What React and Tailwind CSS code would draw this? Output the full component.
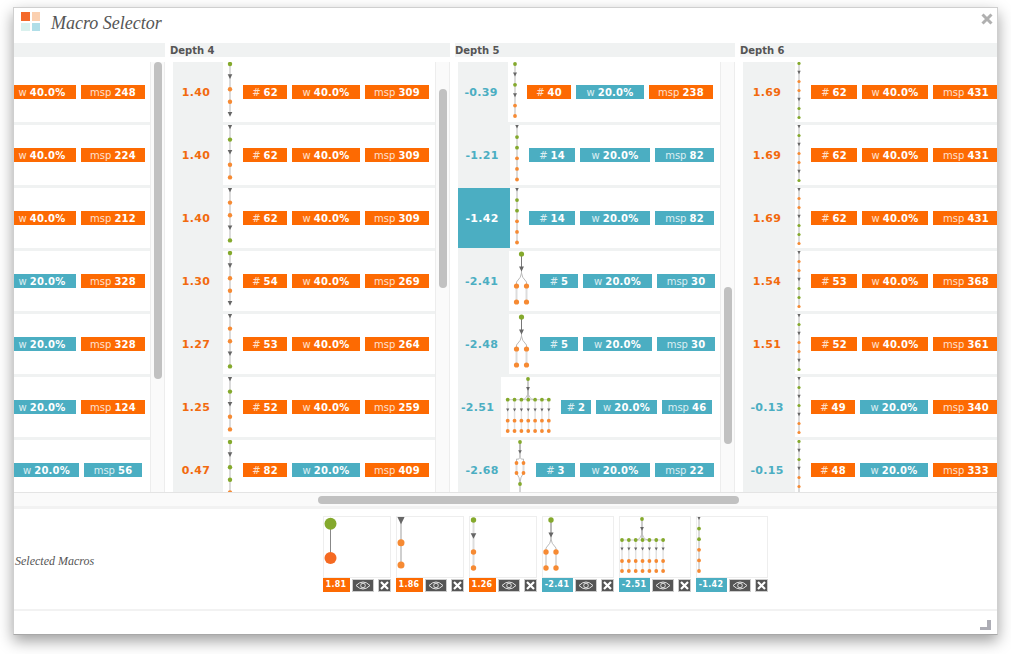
import React from 'react';

const GREEN = '#84a92c';
const ORANGE = '#f68a33';
const DARK = '#666666';

// one tree node: G = green dot, O = orange dot, T = dark triangle
const Node = ({ t, x, y, r, color }) => {
  if (t === 'T') {
    const s = r * 1.05;
    return <polygon points={`${x - s},${y - s} ${x + s},${y - s} ${x},${y + s}`} fill={DARK} />;
  }
  return <circle cx={x} cy={y} r={r} fill={color || (t === 'G' ? GREEN : ORANGE)} />;
};

const Chain = ({ w, h = 60, x, y0, step, r, nodes, line = '#cfcfcf', lineW = 1.5, orange }) => {
  const last = y0 + step * (nodes.length - 1);
  return (
    <svg width={w} height={h} className="shrink-0 block">
      <line x1={x} x2={x} y1={y0} y2={last} stroke={line} strokeWidth={lineW} />
      {nodes.split('').map((t, i) => (
        <Node key={i} t={t} x={x} y={y0 + step * i} r={r} color={t === 'O' ? orange : undefined} />
      ))}
    </svg>
  );
};

const Fork = ({ w, h = 60, x, dx, ys, r, r0, tail }) => {
  const [root, tri, o1, o2] = ys;
  const l = x - dx;
  const rt = x + dx;
  return (
    <svg width={w} height={h} className="shrink-0 block">
      <line x1={x} x2={x} y1={root} y2={tri} stroke="#777" strokeWidth="1" />
      <path d={`M${x} ${tri} L${x} ${tri + 4} Q${x} ${tri + 8} ${l} ${o1 - 4} L${l} ${o1}`} stroke="#bbb" fill="none" />
      <path d={`M${x} ${tri} L${x} ${tri + 4} Q${x} ${tri + 8} ${rt} ${o1 - 4} L${rt} ${o1}`} stroke="#bbb" fill="none" />
      <line x1={l} x2={l} y1={o1} y2={o2} stroke="#dddddd" strokeWidth="2" />
      <line x1={rt} x2={rt} y1={o1} y2={o2} stroke="#dddddd" strokeWidth="2" />
      {tail && (
        <>
          <path d={`M${l} ${o2} Q${x} ${o2 + 4} ${x} ${tail}`} stroke="#bbb" fill="none" />
          <path d={`M${rt} ${o2} Q${x} ${o2 + 4} ${x} ${tail}`} stroke="#bbb" fill="none" />
          <line x1={x} x2={x} y1={tail} y2={h} stroke="#aaa" />
          <Node t="G" x={x} y={tail} r={r} />
        </>
      )}
      <Node t="G" x={x} y={root} r={r0} />
      <Node t="T" x={x} y={tri} r={r * 0.9} />
      {[l, rt].map(px => (
        <g key={px}>
          <Node t="O" x={px} y={o1} r={r} />
          <Node t="O" x={px} y={o2} r={r} />
        </g>
      ))}
    </svg>
  );
};

const Comb = ({ w, h = 60, x, x0, ys }) => {
  const [root, tri, bar, tri2, o1, o2] = ys;
  const xs = [0, 1, 2, 3, 4, 5, 6].map(i => x0 + i * 6.85);
  return (
    <svg width={w} height={h} className="shrink-0 block">
      <line x1={x} x2={x} y1={root} y2={bar} stroke="#999" />
      <line x1={xs[0]} x2={xs[6]} y1={bar} y2={bar} stroke="#cfcfcf" />
      <path d={`M${x - 6} ${bar} Q${x} ${bar - 1} ${x} ${tri + 2} Q${x} ${bar - 1} ${x + 6} ${bar}`} stroke="#bbb" fill="none" />
      <Node t="G" x={x} y={root} r={1.9} />
      <Node t="T" x={x} y={tri} r={1.8} />
      {xs.map(px => (
        <g key={px}>
          <line x1={px} x2={px} y1={bar} y2={o2} stroke="#e2e2e2" strokeWidth="1.5" />
          <Node t="G" x={px} y={bar} r={1.9} />
          <Node t="T" x={px} y={tri2} r={1.5} />
          <Node t="O" x={px} y={o1} r={1.9} />
          <Node t="O" x={px} y={o2} r={1.9} />
        </g>
      ))}
    </svg>
  );
};

const Badge = ({ label, value, tone, width }) => (
  <div
    className={`h-[14px] pt-[1px] shrink-0 flex items-center justify-center gap-[3px] text-[10px] leading-none text-white ${tone === 't' ? 'bg-[#4baec2]' : 'bg-[#fd6a02]'}`}
    style={{ width }}
  >
    <span className="opacity-80">{label}</span>
    <span className="font-bold tracking-[0.2px]">{value}</span>
  </div>
);

const Row = ({ score, tone, selected, tree, badges, pr }) => (
  <div className="h-[60px] shrink-0 bg-white flex items-center overflow-hidden">
    {score ? (
      <div
        className={`flex-1 self-stretch flex items-center justify-center pr-[4px] pt-[2px] text-[11px] font-bold tracking-[0.3px] ${
          selected
            ? 'bg-[#4baec2] text-white'
            : tone === 't'
              ? 'bg-[#f0f2f2] text-[#4baec2]'
              : 'bg-[#f0f2f2] text-[#f26a0e]'
        }`}
      >
        {score}
      </div>
    ) : (
      <div className="flex-1" />
    )}
    {tree}
    <div className="flex gap-[5px]" style={{ paddingRight: pr }}>
      {badges.map(b => (
        <Badge key={b[0]} label={b[0]} value={b[1]} tone={b[2]} width={b[3]} />
      ))}
    </div>
  </div>
);

const Column = ({ title, rows, thumbTop, thumbH }) => (
  <div className="w-[280px] shrink-0 flex flex-col">
    <div className="h-[14px] bg-[#f0f2f2] text-[10px] font-bold leading-[15px] text-[#555]">{title}</div>
    <div className="h-[430px] mt-[5px] flex pl-[3px]">
      <div className="w-[262px] h-full flex flex-col gap-[3px] bg-[#f0f2f2] overflow-hidden">
        {rows.map((r, i) => (
          <Row key={i} {...r} />
        ))}
      </div>
      <div className="w-[15px] h-full bg-[#fafafa] border-x border-[#ededed] flex justify-center">
        {thumbH && <div className="w-[8px] bg-[#c1c1c1] rounded-full" style={{ marginTop: thumbTop, height: thumbH }} />}
      </div>
    </div>
  </div>
);

const d3 = [
  ['40.0%', 'o', '248'],
  ['40.0%', 'o', '224'],
  ['40.0%', 'o', '212'],
  ['20.0%', 't', '328'],
  ['20.0%', 't', '328'],
  ['20.0%', 't', '124'],
].map(([w, t, m]) => ({
  pr: 5,
  badges: [['w', w, t, 68], ['msp', m, 'o', 64]],
}));
d3.push({ pr: 8, badges: [['w', '20.0%', 't', 65], ['msp', '56', 't', 58]] });

const d4Row = (score, nodes, n, w, wt, m, tone = 'o') => ({
  score,
  tone,
  pr: 6,
  tree: <Chain w={20} x={7} y0={2} step={12.6} r={2.2} nodes={nodes} />,
  badges: [['#', n, 'o', 44], ['w', w, wt, 68], ['msp', m, 'o', 64]],
});

const d4 = [
  d4Row('1.40', 'GTOOT', '62', '40.0%', 'o', '309'),
  d4Row('1.40', 'TGTOO', '62', '40.0%', 'o', '309'),
  d4Row('1.40', 'TOOTG', '62', '40.0%', 'o', '309'),
  d4Row('1.30', 'GTOOT', '54', '40.0%', 'o', '269'),
  d4Row('1.27', 'TOOTG', '53', '40.0%', 'o', '264'),
  d4Row('1.25', 'TGTOO', '52', '40.0%', 'o', '259'),
  d4Row('0.47', 'GTGGO', '82', '20.0%', 't', '409'),
];

const tealBadges = (n, m, a, b, c) => [['#', n, 't', a], ['w', '20.0%', 't', b], ['msp', m, 't', c]];
const fork = <Fork w={31} x={12.5} dx={5} ys={[3, 18, 35, 51]} r={2.6} r0={2.6} />;

const d5 = [
  {
    score: '-0.39', tone: 't', pr: 7,
    tree: <Chain w={19} x={7} y0={2} step={10.4} r={1.9} nodes="GTGTOO" />,
    badges: [['#', '40', 'o', 44], ['w', '20.0%', 't', 68], ['msp', '238', 'o', 64]],
  },
  {
    score: '-1.21', tone: 't', pr: 6,
    tree: <Chain w={19} x={7} y0={1.5} step={10.6} r={1.9} nodes="TGGOOO" />,
    badges: tealBadges('14', '82', 46, 70, 59),
  },
  {
    score: '-1.42', tone: 't', selected: true, pr: 6,
    tree: <Chain w={19} x={7} y0={1.5} step={10.6} r={1.9} nodes="TGGOOO" />,
    badges: tealBadges('14', '82', 46, 70, 59),
  },
  { score: '-2.41', tone: 't', pr: 5, tree: fork, badges: tealBadges('5', '30', 38, 69, 58) },
  { score: '-2.48', tone: 't', pr: 5, tree: fork, badges: tealBadges('5', '30', 38, 69, 58) },
  {
    score: '-2.51', tone: 't', pr: 8,
    tree: <Comb w={60} x={27} x0={6.7} ys={[2, 12, 22.7, 33, 43.7, 54]} />,
    badges: tealBadges('2', '46', 30, 61, 50),
  },
  {
    score: '-2.68', tone: 't', pr: 6,
    tree: <Fork w={26} x={10} dx={3.5} ys={[2, 12, 23, 33]} r={1.9} r0={1.9} tail={44} />,
    badges: tealBadges('3', '22', 39, 70, 59),
  },
];

const d6Row = (score, tone, nodes, n, w, wt, m, nw, ww) => ({
  score,
  tone,
  pr: 6,
  tree: <Chain w={16} x={4} y0={1.5} step={9} r={1.6} nodes={nodes} />,
  badges: [['#', n, 'o', nw], ['w', w, wt, ww], ['msp', m, 'o', 66]],
});

const d6 = [
  d6Row('1.69', 'o', 'GTOOTGG', '62', '40.0%', 'o', '431', 46, 66),
  d6Row('1.69', 'o', 'TGTOOTG', '62', '40.0%', 'o', '431', 46, 66),
  d6Row('1.69', 'o', 'TOOTGGO', '62', '40.0%', 'o', '431', 46, 66),
  d6Row('1.54', 'o', 'TOOTGGO', '53', '40.0%', 'o', '368', 46, 66),
  d6Row('1.51', 'o', 'TGTOOTG', '52', '40.0%', 'o', '361', 46, 66),
  d6Row('-0.13', 't', 'TGTGTOO', '49', '20.0%', 't', '340', 44, 68),
  d6Row('-0.15', 't', 'GTGTOOT', '48', '20.0%', 't', '333', 44, 68),
];

const Thumb = ({ tree, score, tone, w, sw }) => (
  <div className="shrink-0" style={{ width: w }}>
    <div className="h-[62px] border border-[#eeeeee] bg-white overflow-hidden">{tree}</div>
    <div className="h-[14px] flex items-end">
      <div
        className={`h-[14px] flex items-center justify-center text-[8px] font-bold tracking-[0.3px] text-white ${tone === 't' ? 'bg-[#4baec2]' : 'bg-[#fd6a02]'}`}
        style={{ width: sw }}
      >
        {score}
      </div>
      <div className="ml-[2px] w-[22px] h-[13px] bg-[#555] border border-[#cccccc] flex items-center justify-center">
        <svg width="16" height="9" viewBox="0 0 16 9" fill="none" stroke="#e4e4e4" strokeWidth="1">
          <path d="M1 4.5Q8 -2.5 15 4.5Q8 11.5 1 4.5Z" />
          <circle cx="8" cy="4.5" r="2.3" />
        </svg>
      </div>
      <div className="ml-auto w-[13px] h-[13px] bg-[#555] border border-[#cccccc] flex items-center justify-center">
        <svg width="9" height="9" viewBox="0 0 9 9" stroke="#ffffff" strokeWidth="2.2">
          <path d="M1 1L8 8M8 1L1 8" />
        </svg>
      </div>
    </div>
  </div>
);

const App = () => (
  <div className="w-[1011px] h-[654px] pt-[7px] pl-[13px] bg-white overflow-hidden [font-family:'DejaVu_Sans',sans-serif]">
    <div className="w-[985px] h-[628px] bg-white border border-[#cfcfcf] border-b-[#a8a8a8] shadow-[0_6px_14px_rgba(0,0,0,0.38)] flex flex-col">
      {/* title bar */}
      <div className="h-[35px] shrink-0 flex items-start pl-[7px] pt-[4px] pr-[4px]">
        <div className="grid grid-cols-[9px_8px] gap-[2px] mt-0">
          <div className="h-[9px] bg-[#f4692a]" />
          <div className="h-[9px] bg-[#fbd0b0]" />
          <div className="h-[8px] bg-[#daf1ee]" />
          <div className="h-[8px] bg-[#b0dee8]" />
        </div>
        <div className="ml-[11px] -mt-[2px] text-[18px] leading-[26px] italic text-[#555] [font-family:'Liberation_Serif',cursive]">Macro Selector</div>
        <svg width="12" height="12" viewBox="0 0 12 12" stroke="#b0b0b0" strokeWidth="3" className="ml-auto mt-[1px]">
          <path d="M1.5 1.5L10.5 10.5M10.5 1.5L1.5 10.5" />
        </svg>
      </div>

      {/* depth columns */}
      <div className="h-[450px] shrink-0 overflow-hidden border-b border-[#e4e4e4]">
        <div className="flex gap-[5px] -ml-[129px]">
          <Column rows={d3} thumbTop={0} thumbH={317} />
          <Column title="Depth 4" rows={d4} thumbTop={27} thumbH={199} />
          <Column title="Depth 5" rows={d5} thumbTop={225} thumbH={157} />
          <Column title="Depth 6" rows={d6} />
        </div>
      </div>
      <div className="h-[13px] shrink-0 bg-[#fafafa] pl-[304px] pt-[3px]">
        <div className="w-[421px] h-[8px] rounded-full bg-[#c1c1c1]" />
      </div>

      {/* selected macros */}
      <div className="h-[103px] shrink-0 border-t-[3px] border-[#f2f2f2] flex items-start">
        <div className="w-[79px] shrink-0 self-center pl-[1px] pt-[3px] text-[12px] italic whitespace-nowrap text-[#555] [font-family:'Liberation_Serif',cursive]">Selected Macros</div>
        <div className="flex-1 flex justify-center gap-[5px] pt-[7px]">
          <Thumb
            w={68} sw={27} score="1.81" tone="o"
            tree={<Chain w={66} x={6.5} y0={6.7} step={34.3} r={6} nodes="GO" line="#888" lineW={1} orange="#f56a22" />}
          />
          <Thumb w={68} sw={27} score="1.86" tone="o" tree={<Chain w={66} x={4} y0={3.5} step={22.3} r={3.5} nodes="TOO" lineW={2} />} />
          <Thumb w={68} sw={27} score="1.26" tone="o" tree={<Chain w={66} x={3.5} y0={3} step={16} r={2.7} nodes="GTOO" lineW={2} line="#dddddd" />} />
          <Thumb w={72} sw={31} score="-2.41" tone="t" tree={<Fork w={70} x={8} dx={5} ys={[3, 18, 35, 51]} r={2.7} r0={2.7} />} />
          <Thumb w={72} sw={31} score="-2.51" tone="t" tree={<Comb w={70} x={22} x0={2} ys={[2, 12, 23, 32, 44, 54]} />} />
          <Thumb w={72} sw={31} score="-1.42" tone="t" tree={<Chain w={70} x={2} y0={1} step={10.6} r={1.9} nodes="TGGOOO" />} />
        </div>
      </div>

      {/* footer with resize handle */}
      <div className="flex-1 border-t-2 border-[#f2f2f2] flex justify-end items-end pr-[6px] pb-[4px]">
        <svg width="11" height="10" viewBox="0 0 11 10" fill="#adadb5">
          <path d="M7 0H11V10H0V7H7Z" />
        </svg>
      </div>
    </div>
  </div>
);

export default App;
